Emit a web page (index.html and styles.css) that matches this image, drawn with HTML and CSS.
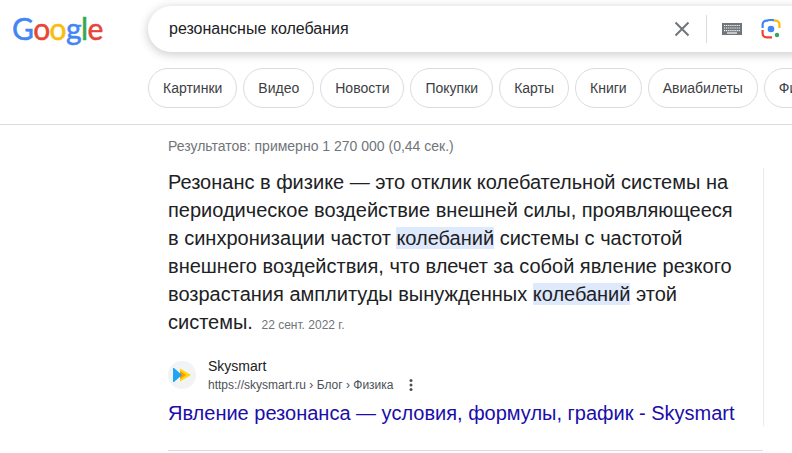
FILE: index.html
```html
<!DOCTYPE html>
<html lang="ru">
<head>
<meta charset="utf-8">
<title>резонансные колебания</title>
<link rel="stylesheet" href="styles.css">
</head>
<body>
<header class="header">
  <div class="top">
    <a class="logo"><span class="b">G</span><span class="r">o</span><span class="y">o</span><span class="b">g</span><span class="g">l</span><span class="r">e</span></a>
    <div class="search">
      <span class="query">резонансные колебания</span>
      <svg class="ic-x" width="16" height="16" viewBox="0 0 16 16"><path d="M1.5 1.5 14.5 14.5M14.5 1.5 1.5 14.5" stroke="#70757a" stroke-width="2" fill="none"/></svg>
      <span class="sep"></span>
      <svg class="ic-kb" width="20" height="12" viewBox="0 0 20 12"><rect width="20" height="12" fill="#70757a"/><path d="M2 2.5h16M2 5h16" stroke="#fff" stroke-width="1.2" stroke-dasharray="1.2 .9"/><path d="M2 7.6h16" stroke="#fff" stroke-width="1.2" stroke-dasharray="1.2 .9"/><path d="M5 10h10" stroke="#fff" stroke-width="1.2"/></svg>
      <svg class="ic-lens" width="20" height="20" viewBox="0 0 20 20" fill="none" stroke-width="2.2">
        <path d="M1.6 9V5.5A3.9 3.9 0 0 1 5.5 1.6H7" stroke="#4285f4"/>
        <path d="M7 1.6 8 1h4l1 .6" stroke="#4285f4"/>
        <path d="M13 1.6h1.5a3.9 3.9 0 0 1 3.9 3.9V9" stroke="#fbbc05"/>
        <path d="M1.6 11v3.5a3.9 3.9 0 0 0 3.9 3.9H11" stroke="#ea4335"/>
        <circle cx="10" cy="10" r="3.3" fill="#4285f4" stroke="none"/>
        <circle cx="16" cy="16" r="2.2" fill="#34a853" stroke="none"/>
      </svg>
    </div>
  </div>
  <nav class="chips">
    <a class="chip">Картинки</a>
    <a class="chip">Видео</a>
    <a class="chip">Новости</a>
    <a class="chip">Покупки</a>
    <a class="chip">Карты</a>
    <a class="chip">Книги</a>
    <a class="chip">Авиабилеты</a>
    <a class="chip">Финансы</a>
  </nav>
</header>
<main class="main">
  <div class="stats">Результатов: примерно 1 270 000 (0,44 сек.)</div>
  <section class="card">
    <p class="snippet">Резонанс в физике — это отклик колебательной системы на периодическое воздействие внешней силы, проявляющееся в синхронизации частот <mark>колебаний</mark> системы с частотой внешнего воздействия, что влечет за собой явление резкого возрастания амплитуды вынужденных <mark>колебаний</mark> этой системы. <span class="date">22 сент. 2022 г.</span></p>
    <div class="source">
      <span class="favicon">
        <svg width="18" height="14" viewBox="0 0 18 14"><path d="M7 .5 18 7 7 13.5Z" fill="#ffd60a"/><path d="M7 3 13 7 7 11Z" fill="#ff9800"/><path d="M0 0H1L9 7 1 14H0Z" fill="#1ea5f5"/></svg>
      </span>
      <div class="site">
        <div class="name">Skysmart</div>
        <div class="url">https://skysmart.ru<span class="crumb"> › Блог › Физика</span><svg class="dots" width="4" height="14" viewBox="0 0 4 14"><circle cx="2" cy="2.5" r="1.5"/><circle cx="2" cy="7" r="1.5"/><circle cx="2" cy="11.5" r="1.5"/></svg></div>
      </div>
    </div>
    <a class="title">Явление резонанса — условия, формулы, график - Skysmart</a>
  </section>
  <div class="rule"></div>
</main>
</body>
</html>
```
FILE: styles.css
```css
* { box-sizing: border-box; }
html, body { margin: 0; padding: 0; }
body {
  width: 792px;
  height: 453px;
  overflow: hidden;
  background: #fff;
  font-family: "Liberation Sans", Arial, sans-serif;
  color: #202124;
}
.header { height: 125px; border-bottom: 1px solid #dadce0; overflow: hidden; }
.top { display: flex; padding-top: 6px; height: 62px; }
.logo {
  flex: none;
  width: 148px;
  padding-left: 12px;
  font-family: "Lato", sans-serif;
  font-size: 30px;
  line-height: 44px;
  letter-spacing: -.6px;
  -webkit-text-stroke: .5px;
  font-weight: 400;
  height: 46px;
}
.b { color: #4285f4; }
.r { color: #ea4335; }
.y { color: #fbbc05; }
.g { color: #34a853; }
.search {
  flex: none;
  width: 700px;
  height: 46px;
  border-radius: 23px;
  background: #fff;
  box-shadow: 0 2px 8px 1px rgba(64, 60, 67, .24);
  display: flex;
  align-items: center;
  padding-left: 21px;
}
.query { flex: none; width: 505px; font-size: 16px; color: #202124; }
.ic-x { flex: none; margin-right: 16px; }
.sep { flex: none; width: 1px; height: 28px; background: #dadce0; margin-right: 15px; }
.ic-kb { flex: none; margin-right: 19px; }
.ic-lens { flex: none; }
.chips { display: flex; gap: 6px; padding-left: 148px; padding-top: 6px; white-space: nowrap; }
.chip {
  flex: none;
  height: 40px;
  line-height: 38px;
  padding: 0 14px;
  border: 1px solid #dadce0;
  border-radius: 20px;
  font-size: 14px;
  color: #3c4043;
}
.main { padding-left: 168px; }
.stats { font-size: 14px; line-height: 20px; margin-top: 11px; color: #70757a; height: 23px; }
.card {
  width: 596px;
  height: 258px;
  margin-top: 9px;
  padding-right: 28px;
  border-right: 1px solid #ebebeb;
}
.snippet { margin: 0; font-size: 20px; line-height: 28px; color: #202124; }
mark { background: #dfe9fc; color: inherit; }
.date { font-size: 12px; color: #70757a; margin-left: 3px; }
.source { display: flex; margin-top: 16px; align-items: center; height: 40px; }
.favicon {
  width: 28px; height: 28px; border-radius: 50%;
  background: #f1f3f4; display: flex; align-items: center; justify-content: center;
  margin-right: 12px; flex: none;
}
.favicon svg { width: 18px; height: 14px; }
.name { font-size: 14px; line-height: 20px; color: #202124; }
.url { font-size: 12px; line-height: 18px; color: #4d5156; display: flex; align-items: center; white-space: pre; }
.dots { margin-left: 15px; fill: #4d5156; }
.title { display: block; font-size: 20px; line-height: 26px; color: #1a0dab; white-space: nowrap; margin-top: 5px; }
.rule { width: 595px; height: 1px; background: #dadce0; margin-top: 24px; }
```
